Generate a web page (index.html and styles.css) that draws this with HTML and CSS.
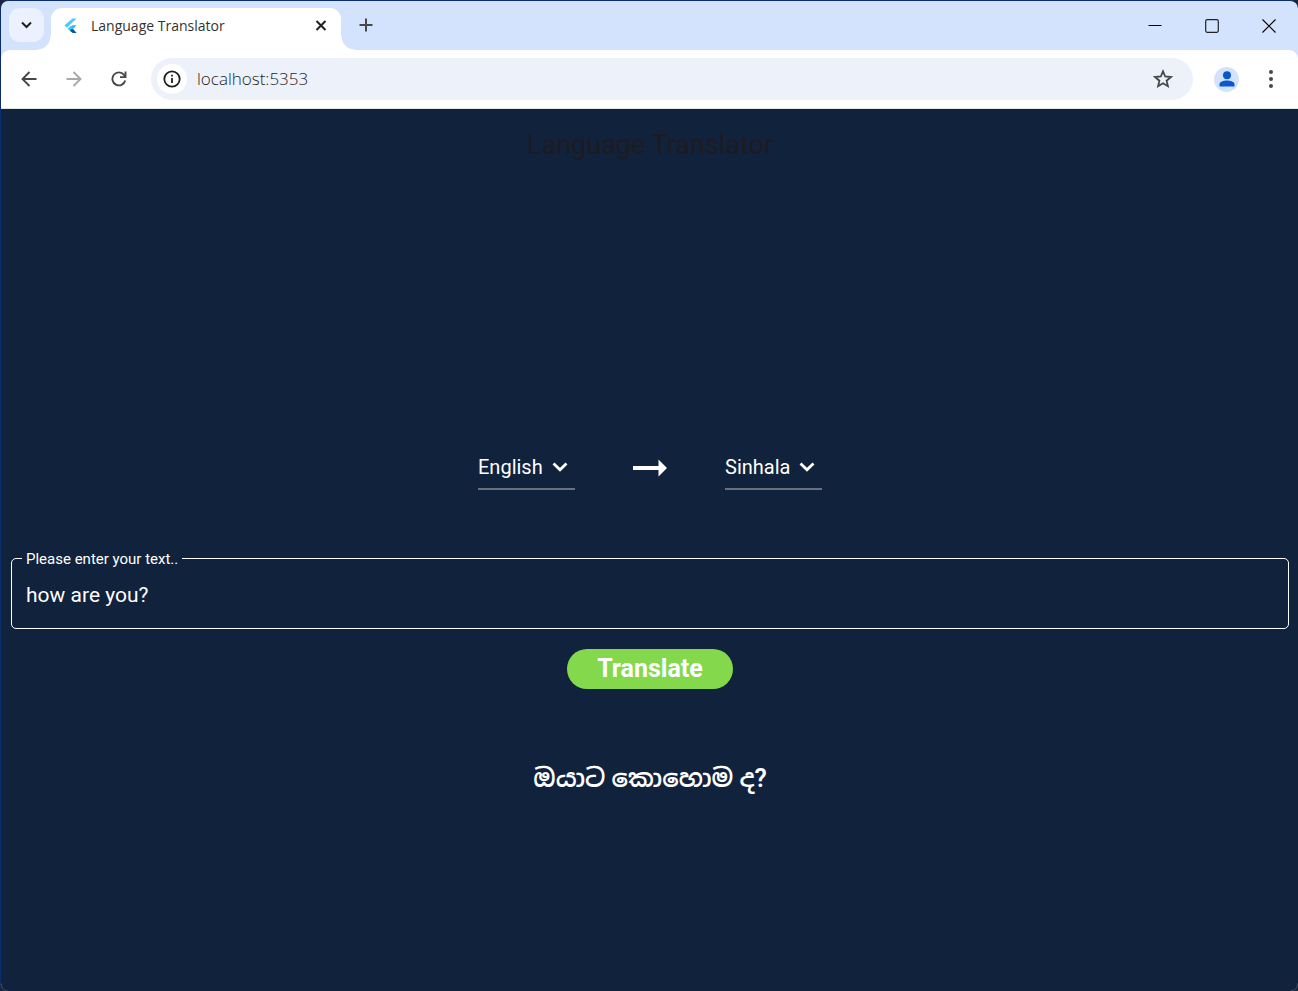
FILE: index.html
```html
<!DOCTYPE html>
<html lang="en">
<head>
<meta charset="utf-8">
<title>Language Translator</title>
<link rel="stylesheet" href="styles.css">
</head>
<body>
<div class="window">
  <header class="tabstrip">
    <button class="tab-search" aria-label="Search tabs">
      <svg width="12" height="8" viewBox="0 0 12 8" fill="none" stroke="#1f1f1f" stroke-width="2"><path d="M1 1.500 5.500 6l4.500-4.500"/></svg>
    </button>
    <div class="tab">
      <svg width="14" height="16" viewBox="0 0 14 16"><path d="M8.500.5h4L3 9.800.5 7.300z" fill="#54c5f8"/><path d="M8.500 7.200h4L8.900 11l-3.400.2-1.700-.7z" fill="#29b6f6"/><path d="m3.800 10.900 2.900-2.600 2.800 2.600-2.800 2.500z" fill="#40c4ff"/><path d="m6.500 11.500 2.500-.6 3.700 4.100h-4l-2.500-2z" fill="#01579b"/></svg>
      <span class="tab-title">Language Translator</span>
      <button class="icon-button" aria-label="Close tab">
        <svg width="12" height="12" viewBox="0 0 12 12" stroke="#1f1f1f" stroke-width="2"><path d="m1.500 1 9 9m0-9-9 9"/></svg>
      </button>
    </div>
    <button class="new-tab" aria-label="New tab">
      <svg width="14" height="14" viewBox="0 0 14 14" stroke="#474747" stroke-width="2"><path d="M7 .5v13M.5 7h13"/></svg>
    </button>
    <div class="caption">
      <button class="caption-button" aria-label="Minimize"><svg width="14" height="14" viewBox="0 0 14 14" stroke="#000"><path d="M.5 6.500h13"/></svg></button>
      <button class="caption-button" aria-label="Maximize"><svg width="14" height="14" viewBox="0 0 14 14" fill="none" stroke="#222"><rect x=".7" y=".7" width="12.600" height="12.600" rx="1.500" stroke-width="1.200"/></svg></button>
      <button class="caption-button" aria-label="Close"><svg width="14" height="14" viewBox="0 0 14 14" stroke="#000" stroke-width="1.100"><path d="m.5.5 13 13m0-13-13 13"/></svg></button>
    </div>
  </header>
  <nav class="toolbar">
    <button class="nav-button" aria-label="Back"><svg width="16" height="16" viewBox="0 0 16 16" fill="none" stroke="#474747" stroke-width="1.900"><path d="M15.500 8H2M8.500 1 1.500 8l7 7"/></svg></button>
    <button class="nav-button" aria-label="Forward"><svg width="16" height="16" viewBox="0 0 16 16" fill="none" stroke="#a9a9a9" stroke-width="1.900"><path d="M.5 8H14M7.500 1l7 7-7 7"/></svg></button>
    <button class="nav-button" aria-label="Reload"><svg width="16" height="16" viewBox="0 0 16 16" fill="none" stroke="#474747" stroke-width="1.900"><path d="M14.200 9.500A6.500 6.500 0 1 1 13 3.800l1.500 1.800"/><path d="M14.500.5v5.600H9"/></svg></button>
    <div class="address">
      <button class="site-info" aria-label="Site information"><svg width="18" height="18" viewBox="0 0 18 18" fill="none" stroke="#1f1f1f" stroke-width="1.800"><circle cx="9" cy="9" r="7.700"/><path d="M9 8v5M9 4.700v1.900"/></svg></button>
      <input class="url" type="text" aria-label="Address" value="localhost:5353">
      <button class="icon-button" aria-label="Bookmark"><svg width="20" height="20" viewBox="0 0 20 20" fill="none" stroke="#474747" stroke-width="1.800"><path d="m10 2.300 2.200 5.200 5.700.5-4.300 3.700 1.300 5.500-4.900-2.900-4.900 2.900 1.300-5.500L2.100 8l5.700-.5z"/></svg></button>
    </div>
    <button class="profile" aria-label="Profile"><svg width="16" height="16" viewBox="0 0 16 16" fill="#0b57d0"><circle cx="8" cy="4.200" r="4"/><path d="M.5 15.500v-2.300C.5 10.800 4.500 9.500 8 9.500s7.500 1.300 7.500 3.700v2.300z"/></svg></button>
    <button class="menu" aria-label="Menu"><svg width="4" height="18" viewBox="0 0 4 18" fill="#474747"><circle cx="2" cy="2" r="2"/><circle cx="2" cy="9" r="2"/><circle cx="2" cy="16" r="2"/></svg></button>
  </nav>
  <main class="app">
    <h1 class="app-title">Language Translator</h1>
    <form class="translator">
      <div class="languages">
        <div class="dropdown">
          <select class="language" aria-label="From language"><option>English</option><option>Sinhala</option></select>
          <svg class="chevron" width="16" height="10" viewBox="0 0 16 10" fill="none" stroke="#fff" stroke-width="2.800"><path d="m1.500 1.500 6.500 6.300 6.500-6.300"/></svg>
        </div>
        <svg width="34" height="18" viewBox="0 0 34 18" fill="#fff"><path d="M0 7h25.500V.5L34 9l-8.500 8.500V11H0z"/></svg>
        <div class="dropdown">
          <select class="language" aria-label="To language"><option>Sinhala</option><option>English</option></select>
          <svg class="chevron" width="16" height="10" viewBox="0 0 16 10" fill="none" stroke="#fff" stroke-width="2.800"><path d="m1.500 1.500 6.500 6.300 6.500-6.300"/></svg>
        </div>
      </div>
      <fieldset class="field">
        <legend class="field-legend"><label for="source">Please enter your text..</label></legend>
        <input class="source" id="source" type="text" value="how are you?">
      </fieldset>
      <button class="translate" type="button">Translate</button>
      <output class="result" lang="si">ඔයාට කොහොම ද?</output>
    </form>
  </main>
</div>
</body>
</html>
```
FILE: styles.css
```css
* { box-sizing: border-box; }
body { margin: 0; background: #1d2638; }
button, input, select { font: inherit; color: inherit; border: 0; padding: 0; margin: 0; background: none; }
button { display: grid; place-items: center; }
svg { display: block; flex: none; }

.window {
  min-height: 100vh;
  display: flex;
  flex-direction: column;
  border: 1px solid #0b2c6b;
  border-width: 1px 0 0 1px;
  border-radius: 8px;
  overflow: hidden;
  background: #d3e2fd;
  font-family: "Open Sans", "Noto Sans", sans-serif;
  color: #1f1f1f;
}

.tabstrip { display: flex; height: 49px; padding: 7px 0 0 8px; }
.tab-search { width: 35px; height: 34px; border-radius: 11px; background: #ebf1fe; }
.tab {
  position: relative;
  display: flex;
  align-items: center;
  width: 290px;
  height: 42px;
  margin-left: 7px;
  padding: 0 14px 6px 13px;
  border-radius: 11px 11px 0 0;
  background: #fff;
}
.tab::before, .tab::after {
  content: "";
  position: absolute;
  bottom: 0;
  width: 14px;
  height: 14px;
}
.tab::before { right: 100%; background: radial-gradient(circle at 0 0, transparent 13px, #fff 14px); }
.tab::after { left: 100%; background: radial-gradient(circle at 100% 0, transparent 13px, #fff 14px); }
.tab-title { flex: 1; margin-left: 13px; font-size: 14px; font-weight: 400; line-height: 20px; color: #333; }
.new-tab { width: 34px; height: 34px; margin-left: 8px; }
.caption { display: flex; margin-left: auto; padding-right: 1px; }
.caption-button { width: 57px; height: 36px; }

.toolbar {
  display: flex;
  align-items: center;
  height: 59px;
  padding: 0 15px 0 5px;
  border-bottom: 1px solid #dfe8df;
  border-radius: 9px 9px 0 0;
  background: #fff;
}
.nav-button { width: 45px; height: 40px; }
.address {
  flex: 1;
  display: flex;
  align-items: center;
  height: 42px;
  margin-left: 10px;
  padding: 0 20px 0 6px;
  border-radius: 21px;
  background: #ecf1fa;
}
.site-info { width: 30px; height: 30px; border-radius: 50%; background: #fff; }
.url { flex: 1; min-width: 0; margin-left: 10px; font-size: 17px; font-weight: 300; line-height: 24px; }
.profile { width: 25px; height: 25px; margin-left: 21px; border-radius: 50%; background: #d3e3fd; }
.menu { width: 24px; height: 32px; margin-left: 20px; }

.app {
  flex: 1;
  display: flex;
  flex-direction: column;
  padding: 16px 9px 0 10px;
  background: #11223d;
  font-family: Roboto, "Noto Sans Sinhala", "Noto Sans", sans-serif;
  color: #fff;
}
.app-title { margin: 0; font-size: 27px; font-weight: 400; line-height: 40px; text-align: center; color: #1d1b20; }
.translator {
  flex: 1;
  display: flex;
  flex-direction: column;
  align-items: center;
  justify-content: center;
  padding-top: 86px;
}
.languages { display: flex; align-items: center; gap: 58px; }
.dropdown { display: grid; align-items: center; border-bottom: 2px solid #6b7080; }
.language {
  grid-area: 1 / 1;
  width: 97px;
  height: 42px;
  appearance: none;
  font-size: 20px;
  font-weight: 400;
}
.language option { color: #1d1b20; }
.chevron { grid-area: 1 / 1; justify-self: end; margin-right: 7px; pointer-events: none; }
.field {
  align-self: stretch;
  min-width: 0;
  margin: 60px 0 20px;
  padding: 0 14px;
  border: 1px solid #fff;
  border-radius: 5px;
}
.field-legend { margin-left: -4px; padding: 0 4px; font-size: 15px; font-weight: 400; line-height: 18px; }
.source { display: block; width: 100%; height: 60px; padding-bottom: 6px; font-size: 21px; font-weight: 400; }
.translate {
  height: 40px;
  padding: 0 30px;
  border-radius: 20px;
  background: #83d94b;
  font-size: 25px;
  font-weight: 700;
  line-height: 40px;
}
.result { margin-top: 72px; font-size: 25px; font-weight: 600; line-height: 36px; }
```
